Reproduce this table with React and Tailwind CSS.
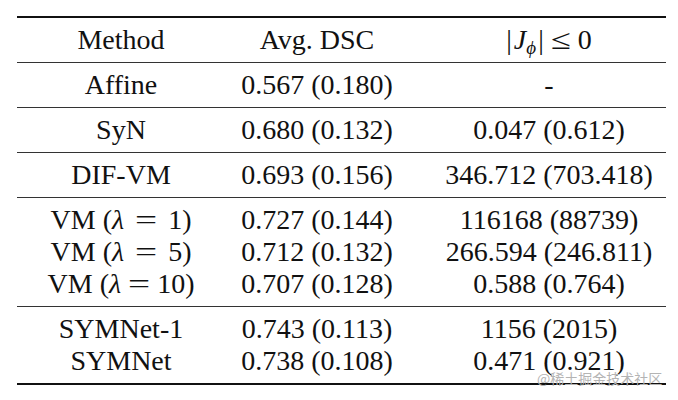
import React from "react";

const Eq = ({ wide }) => (
  <span
    className={
      wide
        ? "inline-block w-[22px] text-center mx-[11px] scale-x-[1.4]"
        : "inline-block w-[22px] text-center mx-[7px] scale-x-[1.4]"
    }
  >
    =
  </span>
);

const vm = (n, wide) => (
  <>
    VM (<span className="italic">λ</span>
    <Eq wide={wide} />
    {n})
  </>
);

const sections = [
  [["Affine", "0.567 (0.180)", "-"]],
  [["SyN", "0.680 (0.132)", "0.047 (0.612)"]],
  [["DIF-VM", "0.693 (0.156)", "346.712 (703.418)"]],
  [
    [vm("1", true), "0.727 (0.144)", "116168 (88739)"],
    [vm("5", true), "0.712 (0.132)", "266.594 (246.811)"],
    [vm("10", false), "0.707 (0.128)", "0.588 (0.764)"],
  ],
  [
    ["SYMNet-1", "0.743 (0.113)", "1156 (2015)"],
    ["SYMNet", "0.738 (0.108)", "0.471 (0.921)"],
  ],
];

function Row({ cells }) {
  return (
    <div className="grid grid-cols-[208px_184px_257px] leading-[32px]">
      <div className="text-center whitespace-nowrap">{cells[0]}</div>
      <div className="text-center whitespace-nowrap">{cells[1]}</div>
      <div className="text-center whitespace-nowrap pl-[23px]">{cells[2]}</div>
    </div>
  );
}

export default function App() {
  return (
    <div className="w-[678px] h-[400px] bg-white relative overflow-hidden" style={{ fontFamily: '"Liberation Serif", "Times New Roman", serif' }}>
      <div className="ml-[17px] mt-[16px] w-[649px] text-[28px] text-[#111] border-t-2 border-b-2 border-[#111]">
        <div className="py-[6px]">
          <Row
            cells={[
              "Method",
              "Avg. DSC",
              <span>
                |<span className="italic ml-[2px]">J</span>
                <sub className="italic text-[19px]">ϕ</sub>
                <span className="ml-[2px]">|</span>
                <span className="inline-block w-[20px] text-center mx-[7px] scale-x-[1.3]">≤</span>0
              </span>,
            ]}
          />
        </div>
        {sections.map((rows, i) => (
          <div key={i} className="border-t border-[#333] py-[6px]">
            {rows.map((r, j) => (
              <Row key={j} cells={r} />
            ))}
          </div>
        ))}
      </div>
      <div
        className="absolute left-[537px] top-[370px] text-[14px] text-[#b4b4b4] leading-[16px]"
        style={{ fontFamily: '"Noto Sans CJK SC", sans-serif' }}
      >
        @稀土掘金技术社区
      </div>
    </div>
  );
}
